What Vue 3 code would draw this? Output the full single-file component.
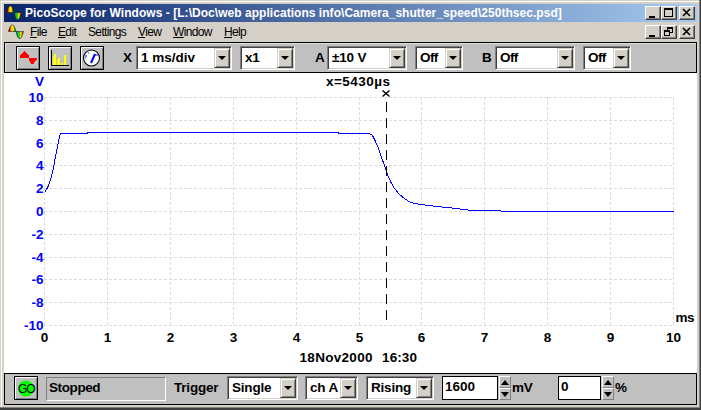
<script setup>
const menus = ['File', 'Edit', 'Settings', 'View', 'Window', 'Help']

const xTicks = [0, 1, 2, 3, 4, 5, 6, 7, 8, 9, 10]
const yTicks = [10, 8, 6, 4, 2, 0, -2, -4, -6, -8, -10]

const xPos = (v) => Math.round(44 + v * 62.9) + 0.5
const yPos = (v) => Math.round(212 - v * 11.4) + 0.5

const trace = [
  [44, 193], [46, 190], [48, 186], [50, 180], [52, 173], [53, 168], [55, 157], [57, 147],
  [59, 137], [60, 134], [86, 134], [88, 133], [335, 133], [341, 134], [369, 134], [372, 136],
  [375, 142], [378, 149], [381, 158], [384, 166], [387, 175], [390, 182], [394, 189],
  [399, 195], [404, 199], [410, 203], [420, 205], [436, 207], [456, 209], [471, 211],
  [500, 211], [501, 212], [673, 212],
].map(([x, y]) => `${x + 0.5},${y + 0.5}`).join(' ')
</script>

<template>
  <div class="app-window">
    <svg class="defs" width="0" height="0">
      <defs>
        <linearGradient id="rainbow" x1="0" x2="1" y1="0" y2="0">
          <stop offset=".08" stop-color="#e00000" />
          <stop offset=".22" stop-color="#ffe800" />
          <stop offset=".32" stop-color="#ffe800" />
          <stop offset=".42" stop-color="#00a000" />
          <stop offset=".54" stop-color="#2050ff" />
          <stop offset=".62" stop-color="#00c020" />
          <stop offset=".74" stop-color="#30d020" />
          <stop offset=".82" stop-color="#ffe800" />
          <stop offset=".96" stop-color="#e02000" />
        </linearGradient>
        <symbol id="logo" viewBox="0 0 16 16">
          <path d="M0.500 7L2 3L3.500 1H5L6.500 3L8 7.500H15.500L14 12L12.500 14.500H11L9.500 13L8 7.500H0.500Z" fill="url(#rainbow)" stroke="#202020" stroke-width=".6" />
        </symbol>
      </defs>
    </svg>

    <header class="title-bar">
      <svg class="logo" width="16" height="16"><use href="#logo" /></svg>
      <span class="title">PicoScope for Windows - [L:\Doc\web applications info\Camera_shutter_speed\250thsec.psd]</span>
      <div class="controls">
        <button class="ctl"><svg width="14" height="12" shape-rendering="crispEdges"><path d="M3 9H9V11H3Z" /></svg></button>
        <button class="ctl"><svg width="14" height="12" shape-rendering="crispEdges"><path d="M2 1H11V10H2ZM3 3V9H10V3Z" fill-rule="evenodd" /></svg></button>
        <button class="ctl close"><svg width="14" height="12"><path d="M3 2L10 9M10 2L3 9" stroke="#000" stroke-width="1.6" /></svg></button>
      </div>
    </header>

    <nav class="menu-bar">
      <svg class="logo" width="16" height="16"><use href="#logo" /></svg>
      <span v-for="m in menus" :key="m" class="menu" :class="'menu-' + m.toLowerCase()"><template v-if="m !== 'Settings'"><u>{{ m[0] }}</u>{{ m.slice(1) }}</template><template v-else>{{ m }}</template></span>
      <div class="controls">
        <button class="ctl"><svg width="14" height="12" shape-rendering="crispEdges"><path d="M3 9H9V11H3Z" /></svg></button>
        <button class="ctl"><svg width="14" height="12" shape-rendering="crispEdges"><path d="M5 1H11V7H8V10H2V4H5ZM6 3V4H8V6H10V3ZM3 6V9H7V6Z" fill-rule="evenodd" /></svg></button>
        <button class="ctl close"><svg width="14" height="12"><path d="M3 2L10 9M10 2L3 9" stroke="#000" stroke-width="1.6" /></svg></button>
      </div>
    </nav>

    <div class="toolbar">
      <button class="tool">
        <svg width="22" height="22" shape-rendering="crispEdges"><path d="M3 11V8L5 7L7 4H8L10 7L12 9V11H20V13L18 14L17 17H14L13 15L12 14V11Z" fill="#f00" /></svg>
      </button>
      <button class="tool">
        <svg width="22" height="22" shape-rendering="crispEdges">
          <path d="M2 3H3V18H20V19H2Z" fill="#000" />
          <path d="M4 10H5V7H7V18H4ZM8 13H9V11H11V18H8ZM12 16H14V18H12ZM15 8H17V18H15Z" fill="#ff0" />
        </svg>
      </button>
      <button class="tool">
        <svg width="22" height="22">
          <circle cx="10.5" cy="11" r="8" fill="#fff" stroke="#000" stroke-width="1.1" />
          <path d="M10 16L14 7" fill="none" stroke="#00f" stroke-width="2" />
          <path d="M4 9H6M7 6H8M14 8H17M4 11H5" stroke="#00f" />
        </svg>
      </button>
      <span class="label label-x">X</span>
      <div class="select timebase"><span>1 ms/div</span><i class="arrow"></i></div>
      <div class="select zoom"><span>x1</span><i class="arrow"></i></div>
      <span class="label label-a">A</span>
      <div class="select range-a"><span>±10 V</span><i class="arrow"></i></div>
      <div class="select off-a"><span>Off</span><i class="arrow"></i></div>
      <span class="label label-b">B</span>
      <div class="select range-b"><span>Off</span><i class="arrow"></i></div>
      <div class="select off-b"><span>Off</span><i class="arrow"></i></div>
    </div>

    <svg class="graph" width="693" height="300" viewBox="4 74 693 300">
      <g class="grid">
        <line v-for="y in yTicks" :key="'h' + y" x1="44" x2="674" :y1="yPos(y)" :y2="yPos(y)" />
        <line v-for="x in xTicks" :key="'v' + x" y1="98" y2="327" :x1="xPos(x)" :x2="xPos(x)" />
      </g>
      <polyline class="trace" :points="trace" />
      <line class="cursor" x1="386.5" x2="386.5" y1="103" y2="326" />
      <g class="axis-y">
        <text x="44" y="87">V</text>
        <text v-for="y in yTicks" :key="y" x="43.5" :y="yPos(y) + 4.5">{{ y }}</text>
      </g>
      <g class="axis-x">
        <text v-for="x in xTicks" :key="x" :x="xPos(x)" y="343">{{ x }}</text>
      </g>
      <text class="note" x="326" y="87" textLength="64">x=5430µs</text>
      <path class="mark" d="M382.5 91.5L389.5 97.5M389.5 91.5L382.5 97.5" />
      <text class="note" x="675.5" y="323" textLength="19">ms</text>
      <text class="note" x="299.5" y="363" textLength="73">18Nov2000</text>
      <text class="note" x="382" y="363" textLength="35">16:30</text>
    </svg>

    <footer class="status-bar">
      <button class="tool">
        <svg width="22" height="22">
          <circle cx="11" cy="11.5" r="8" fill="#0f0" />
          <text class="go" x="11.3" y="15.5">GO</text>
        </svg>
      </button>
      <div class="state">Stopped</div>
      <span class="label label-trigger">Trigger</span>
      <div class="select mode"><span>Single</span><i class="arrow"></i></div>
      <div class="select channel"><span>ch A</span><i class="arrow"></i></div>
      <div class="select edge"><span>Rising</span><i class="arrow"></i></div>
      <div class="field level">1600</div>
      <div class="spinner"><i class="up"></i><i class="down"></i></div>
      <span class="label unit">mV</span>
      <div class="field delay">0</div>
      <div class="spinner"><i class="up"></i><i class="down"></i></div>
      <span class="label unit">%</span>
    </footer>
  </div>
</template>

<style>
  body {
    margin: 0;
    overflow: hidden;
  }
</style>

<style scoped>
  .app-window {
    box-sizing: border-box;
    width: 701px;
    height: 410px;
    padding: 4px 4px 5px;
    display: flex;
    flex-direction: column;
    background: #d4d0c8;
    box-shadow: inset -1px -2px #404040, inset -2px -3px #808080, inset 1px 1px #d4d0c8, inset 2px 2px #fff;
    font: bold 13.5px "Liberation Sans", Arial, sans-serif;
    color: #000;
    white-space: pre;
  }

  .defs {
    position: absolute;
  }

  .title-bar {
    height: 18px;
    display: flex;
    align-items: center;
    padding-left: 2px;
    background: linear-gradient(to right, #0a246a, #a6caf0);
    color: #fff;
    font-size: 12px;
    letter-spacing: 0.04px;
  }

  .title {
    margin-left: 3px;
  }

  .menu-bar {
    height: 20px;
    display: flex;
    align-items: center;
    padding-left: 4px;
    font-size: 12px;
    font-weight: normal;
    letter-spacing: -0.65px;
  }

  .logo {
    flex: none;
  }

  .menu-file { width: 28px; margin-left: 6px; }
  .menu-edit { width: 30px; }
  .menu-settings { width: 50px; }
  .menu-view { width: 35px; }
  .menu-window { width: 51px; }

  .controls {
    margin-left: auto;
    padding-right: 2px;
    display: flex;
  }

  .ctl {
    box-sizing: border-box;
    width: 16px;
    height: 14px;
    padding: 0;
    border: 1px solid;
    border-color: #fff #404040 #404040 #fff;
    background: #d4d0c8;
    box-shadow: inset -1px -1px #808080;
  }

  .ctl svg {
    display: block;
  }

  .ctl.close {
    margin-left: 2px;
  }

  .toolbar,
  .status-bar {
    box-sizing: border-box;
    height: 32px;
    border: 1px solid #000;
    background: #c0c0c0;
    display: flex;
    align-items: flex-start;
    letter-spacing: -0.2px;
  }

  .toolbar {
    padding: 3px 0 0 11px;
    box-shadow: inset 1px 1px #e0e0e0;
  }

  .status-bar {
    padding: 2px 0 0 9px;
  }

  .tool {
    box-sizing: border-box;
    width: 24px;
    height: 24px;
    margin-right: 8px;
    padding: 0;
    border: 1px solid #000;
    background: #c0c0c0;
    box-shadow: inset 1px 1px #fff, inset -1px -1px #808080;
  }

  .tool svg {
    display: block;
  }

  .label {
    line-height: 24px;
  }

  .label-x { width: 13px; margin-left: 11px; }
  .label-a { width: 12px; margin-left: 20px; }
  .label-b { width: 13px; margin-left: 19px; }

  .select {
    box-sizing: border-box;
    height: 24px;
    padding-left: 4px;
    border: 1px solid;
    border-color: #808080 #fff #fff #808080;
    background: #fff;
    box-shadow: inset 1px 1px #404040, inset -1px -1px #d4d0c8;
    display: flex;
    justify-content: space-between;
    line-height: 22px;
  }

  .arrow {
    box-sizing: border-box;
    width: 16px;
    height: 20px;
    margin: 1px;
    flex: none;
    border: 1px solid;
    border-color: #d4d0c8 #404040 #404040 #d4d0c8;
    background: #d4d0c8;
    box-shadow: inset 1px 1px #fff, inset -1px -1px #808080;
    display: flex;
    align-items: center;
    justify-content: center;
  }

  .arrow::after {
    content: "";
    border: 4px solid transparent;
    border-top-color: #000;
    border-bottom: 0;
  }

  .timebase { width: 96px; letter-spacing: 0; }
  .zoom { width: 55px; margin-left: 8px; }
  .range-a { width: 80px; }
  .off-a,
  .off-b { width: 48px; margin-left: 8px; letter-spacing: -0.6px; }
  .range-b { width: 80px; letter-spacing: -0.6px; }

  .graph {
    display: block;
    flex: none;
    background: #fff;
  }

  .grid line {
    stroke: #dcdcdc;
    stroke-dasharray: 3 2;
    shape-rendering: crispEdges;
  }

  .cursor {
    stroke: #000;
    stroke-dasharray: 10 6;
    shape-rendering: crispEdges;
  }

  .trace {
    fill: none;
    stroke: #00f;
    shape-rendering: crispEdges;
  }

  .mark {
    stroke: #000;
    stroke-width: 1.5;
  }

  .axis-y text {
    fill: #00f;
    text-anchor: end;
  }

  .axis-x text {
    text-anchor: middle;
  }

  .go {
    font: 12px "Liberation Sans", Arial, sans-serif;
    letter-spacing: -1px;
    text-anchor: middle;
  }

  .state {
    box-sizing: border-box;
    width: 120px;
    height: 24px;
    margin-top: 1px;
    padding-left: 2px;
    border: 1px solid;
    border-color: #808080 #fff #fff #808080;
    line-height: 20px;
    letter-spacing: -0.4px;
  }

  .label-trigger {
    width: 53px;
    margin-left: 8px;
  }

  .mode { width: 71px; }
  .channel { width: 53px; margin-left: 7px; }
  .edge { width: 68px; margin-left: 8px; }

  .field {
    box-sizing: border-box;
    height: 24px;
    padding-left: 2px;
    border: 1px solid #000;
    background: #fff;
    line-height: 19px;
    letter-spacing: 0;
  }

  .level { width: 56px; margin-left: 8px; }
  .delay { width: 43px; margin-left: 27px; }

  .spinner {
    width: 12px;
    height: 24px;
    margin-left: 1px;
    display: flex;
    flex-direction: column;
  }

  .up,
  .down {
    box-sizing: border-box;
    height: 12px;
    border: 1px solid;
    border-color: #fff #808080 #808080 #fff;
    display: flex;
    align-items: center;
    justify-content: center;
  }

  .up::after,
  .down::after {
    content: "";
    border: 4px solid transparent;
  }

  .up::after {
    border-top: 0;
    border-bottom: 5px solid #000;
  }

  .down::after {
    border-bottom: 0;
    border-top: 5px solid #000;
  }

  .unit {
    width: 19px;
    margin-left: 1px;
  }
</style>
